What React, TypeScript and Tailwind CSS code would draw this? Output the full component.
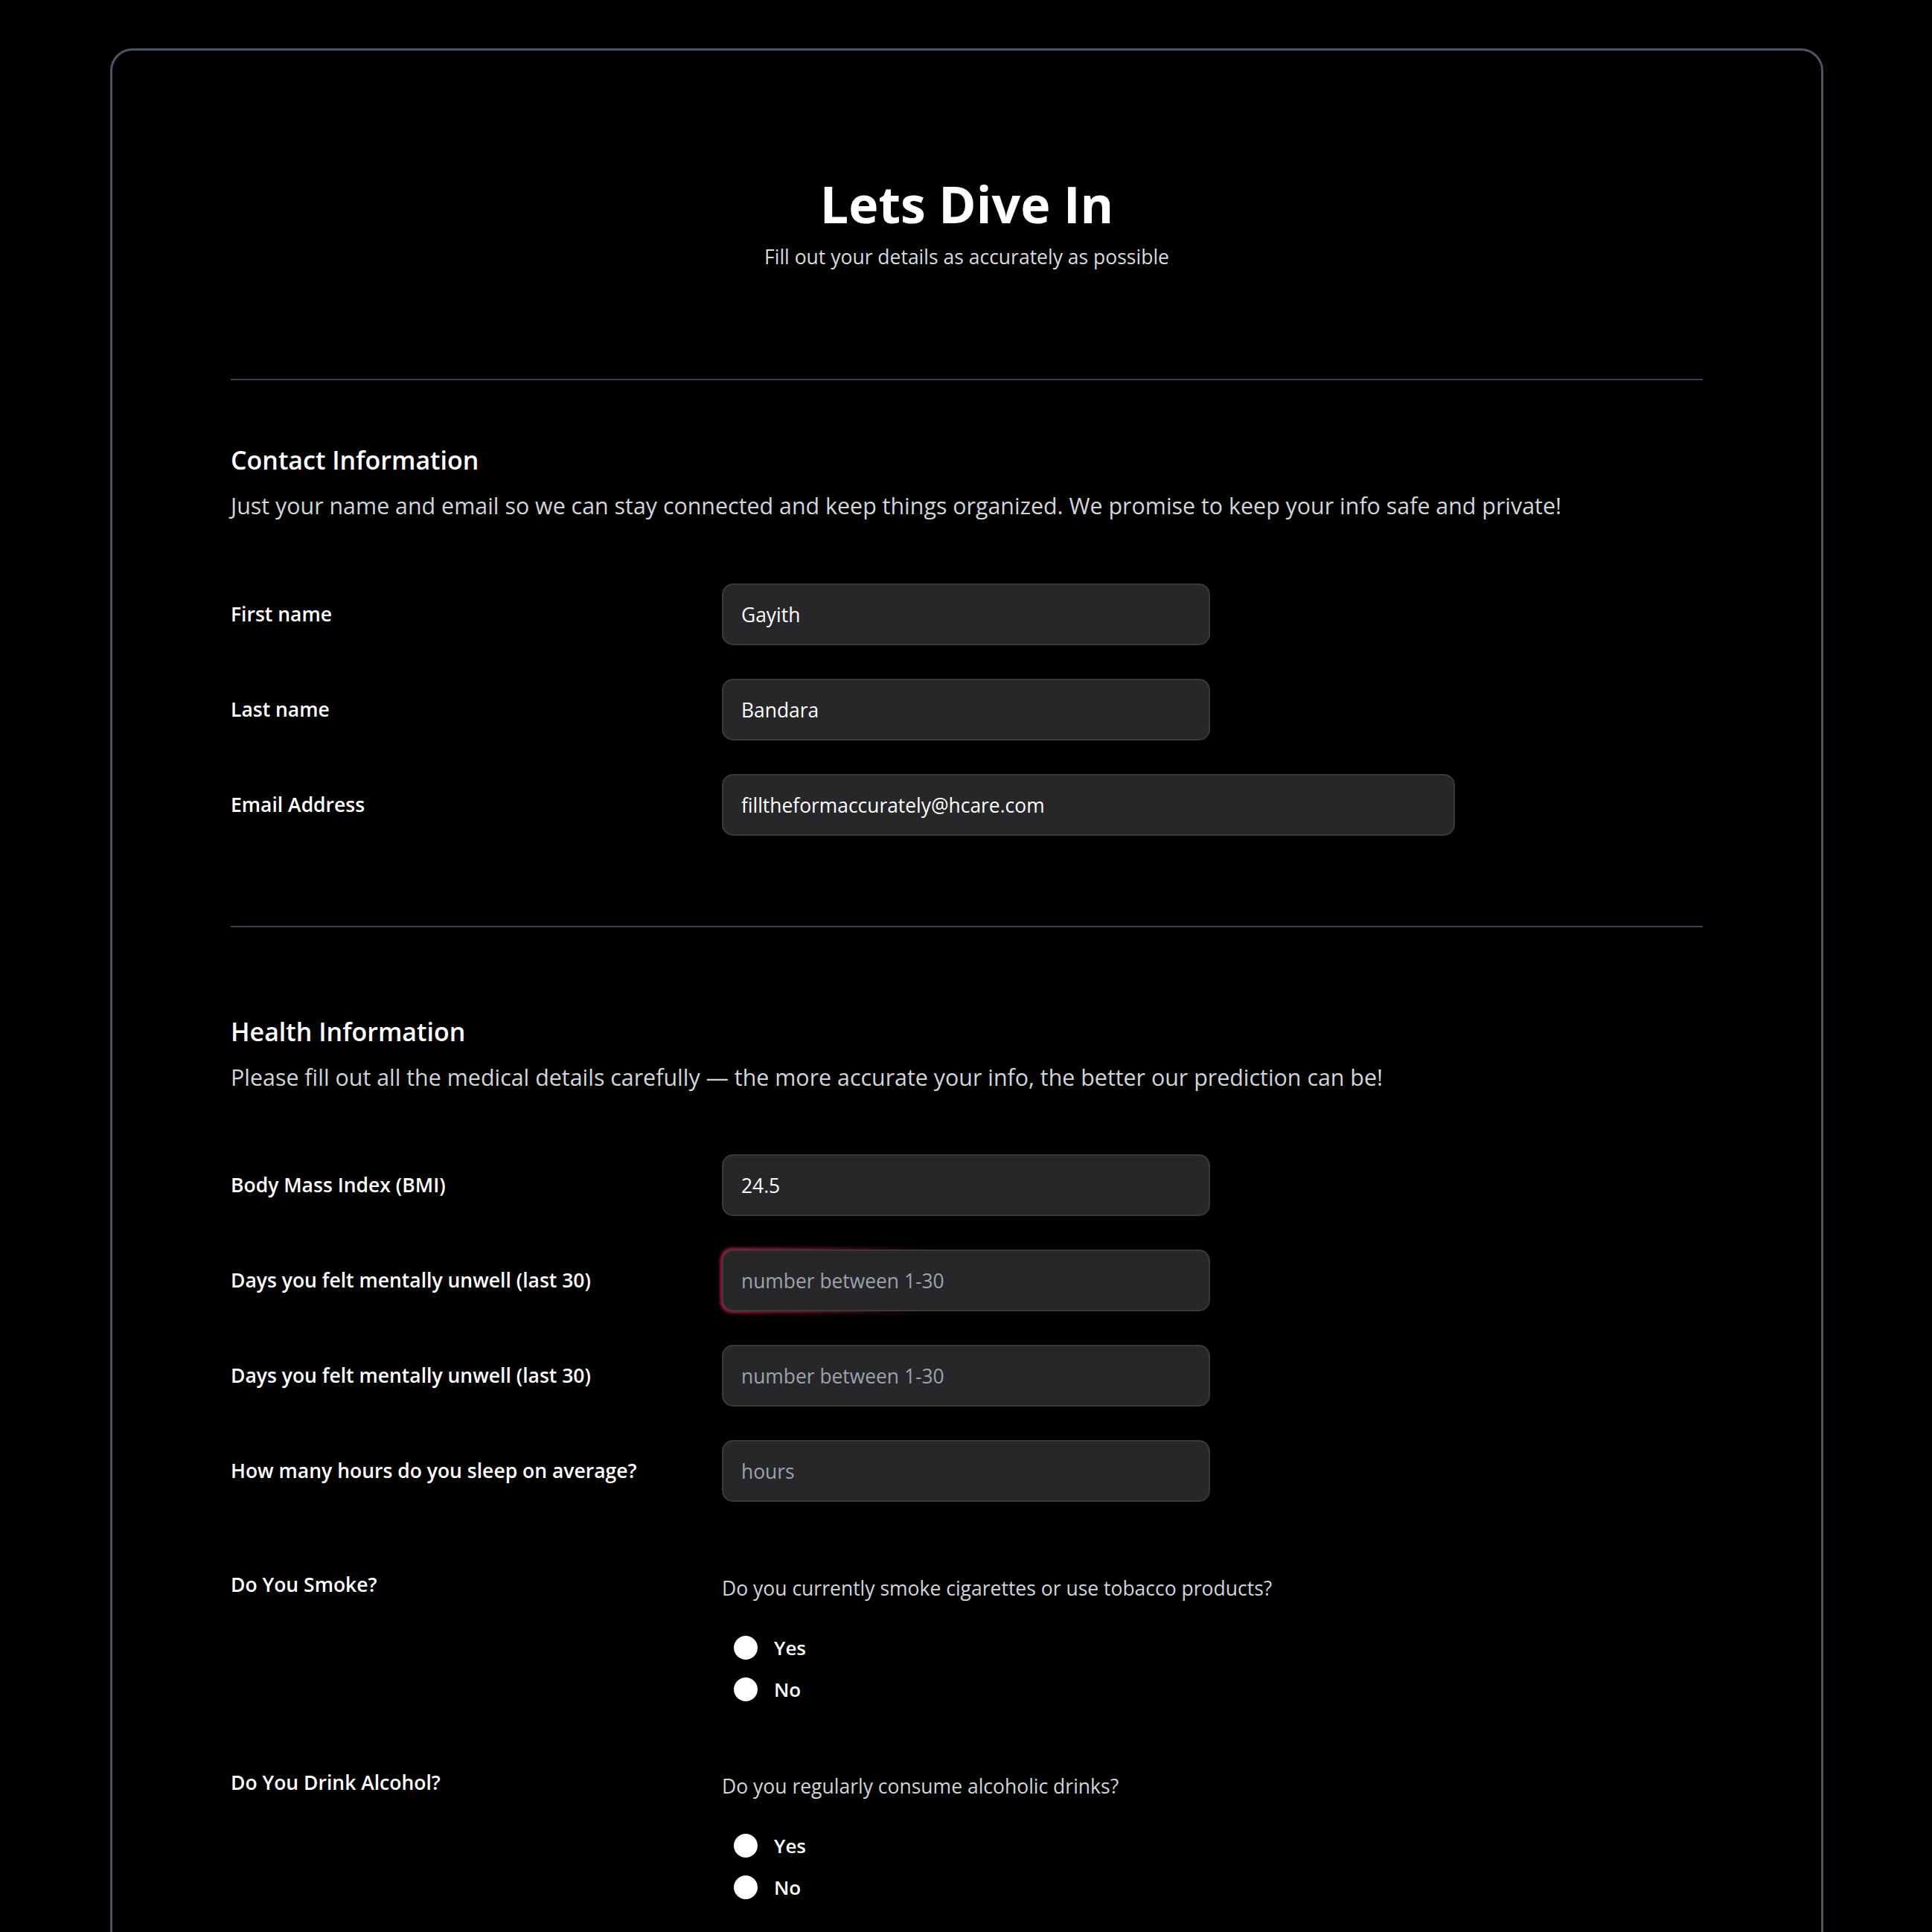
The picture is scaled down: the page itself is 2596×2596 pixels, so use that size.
import React, { useState } from 'react';

interface FieldProps {
  label: string;
  value?: string;
  placeholder?: string;
  wide?: boolean;
  glow?: boolean;
}

function TextRow({ label, value, placeholder, wide, glow }: FieldProps) {
  const [val, setVal] = useState(value ?? '');
  return (
    <div className="grid grid-cols-[660px_1fr] items-center">
      <label className="text-[26.5px] font-semibold text-white">{label}</label>
      <div className={`relative ${wide ? 'w-[985px]' : 'w-[656px]'}`}>
        {glow && (
          <div className="absolute -inset-[2px] rounded-[16px] blur-[2px] bg-[linear-gradient(97deg,rgba(225,29,102,0.9)_0%,rgba(225,29,102,0.5)_22%,transparent_42%)]" />
        )}
        <input
          value={val}
          onChange={(e) => setVal(e.target.value)}
          placeholder={placeholder}
          className="relative block w-full h-[83px] px-[24px] rounded-[15px] bg-[#27272a] border-2 border-[#3a3a3e] text-[26.4px] text-white placeholder:text-[#9ca3af] outline-none"
        />
      </div>
    </div>
  );
}

interface RadioProps {
  label: string;
  question: string;
  name: string;
}

function RadioRow({ label, question, name }: RadioProps) {
  const [choice, setChoice] = useState('');
  return (
    <div className="grid grid-cols-[660px_1fr] items-start">
      <label className="text-[26.5px] font-semibold text-white leading-[36px] -mt-[5px]">{label}</label>
      <div>
        <p className="text-[26.5px] text-[#d1d5db] leading-[36px]">{question}</p>
        <div className="mt-[44px] flex flex-col gap-[20px] pl-[16px]">
          {['Yes', 'No'].map((opt) => (
            <label key={opt} className="flex items-center gap-[22px] h-[36px]">
              <input
                type="radio"
                name={name}
                checked={choice === opt}
                onChange={() => setChoice(opt)}
                className="appearance-none w-[32px] h-[32px] rounded-full bg-white"
              />
              <span className="text-[26px] font-semibold text-white">{opt}</span>
            </label>
          ))}
        </div>
      </div>
    </div>
  );
}

export default function App() {
  return (
    <div className="min-h-screen bg-black pt-[65px] pl-[148px] pr-[146px] font-['Open_Sans',sans-serif]">
      <div className="border-[3px] border-[#4b5563] rounded-[30px] pl-[159px] pr-[159px] pt-[163px] pb-[400px]">
        <div className="text-center">
          <h1 className="text-[68px] font-bold text-white leading-[86px]">Lets Dive In</h1>
          <p className="mt-[10px] text-[26.5px] text-[#d8dbe0] leading-[36px]">
            Fill out your details as accurately as possible
          </p>
        </div>

        <div className="mt-[146px] border-t-2 border-[#374151]" />

        <section className="mt-[85px]">
          <h2 className="text-[34px] font-semibold text-white leading-[44px]">Contact Information</h2>
          <p className="mt-[20px] text-[30.4px] text-[#d1d5db] leading-[40px]">
            Just your name and email so we can stay connected and keep things organized. We promise to keep your info safe and private!
          </p>
          <div className="mt-[84px] flex flex-col gap-[45px]">
            <TextRow label="First name" value="Gayith" />
            <TextRow label="Last name" value="Bandara" />
            <TextRow label="Email Address" value="filltheformaccurately@hcare.com" wide />
          </div>
        </section>

        <div className="mt-[121px] border-t-2 border-[#374151]" />

        <section className="mt-[118px]">
          <h2 className="text-[34px] font-semibold text-white leading-[44px]">Health Information</h2>
          <p className="mt-[20px] text-[30.4px] text-[#d1d5db] leading-[40px]">
            Please fill out all the medical details carefully — the more accurate your info, the better our prediction can be!
          </p>
          <div className="mt-[83px] flex flex-col gap-[45px]">
            <TextRow label="Body Mass Index (BMI)" value="24.5" />
            <TextRow label="Days you felt mentally unwell (last 30)" placeholder="number between 1-30" glow />
            <TextRow label="Days you felt mentally unwell (last 30)" placeholder="number between 1-30" />
            <TextRow label="How many hours do you sleep on average?" placeholder="hours" />
          </div>
          <div className="mt-[98px] flex flex-col gap-[94px]">
            <RadioRow
              label="Do You Smoke?"
              question="Do you currently smoke cigarettes or use tobacco products?"
              name="smoke"
            />
            <RadioRow
              label="Do You Drink Alcohol?"
              question="Do you regularly consume alcoholic drinks?"
              name="alcohol"
            />
          </div>
        </section>
      </div>
    </div>
  );
}
